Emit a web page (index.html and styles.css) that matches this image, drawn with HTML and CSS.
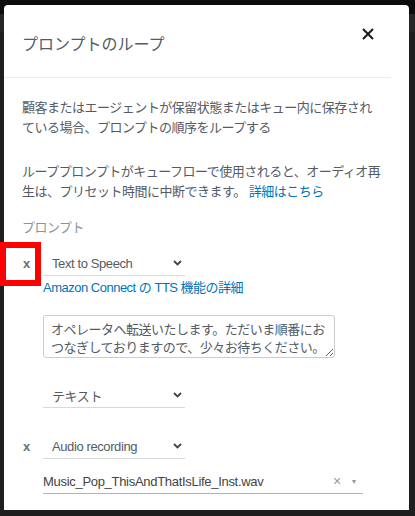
FILE: index.html
```html
<!DOCTYPE html>
<html>
<head>
    <meta charset="utf-8">
    <meta content="width=device-width, initial-scale=1" name="viewport">
    <title>プロンプトのループ</title>
    <link rel="stylesheet" href="styles.css">
</head>
<body>
<div class="modal">
    <div class="modal-header">
        <h2 class="modal-title">プロンプトのループ</h2>
        <button class="close-btn" type="button">
            <svg width="12" height="12" viewBox="0 0 12 12">
                <path d="M1 1 L11 11 M11 1 L1 11" stroke="#16191f" stroke-width="2" fill="none"/>
            </svg>
        </button>
    </div>
    <div class="modal-body">
        <p class="desc">顧客またはエージェントが保留状態またはキュー内に保存され<br>ている場合、プロンプトの順序をループする</p>
        <p class="desc">ループプロンプトがキューフローで使用されると、オーディオ再<br>生は、プリセット時間に中断できます。 <a class="link" href="#">詳細はこちら</a></p>

        <div class="field-label">プロンプト</div>

        <div class="prompt-row">
            <span class="remove">x</span>
            <div class="select">
                <span>Text to Speech</span>
                <svg class="chevron" width="9" height="6" viewBox="0 0 9 6">
                    <path d="M1 1 L4.5 4.5 L8 1" stroke="#444" stroke-width="1.8" fill="none"/>
                </svg>
            </div>
        </div>
        <a class="link tts-link" href="#">Amazon Connect の TTS 機能の詳細</a>
        <textarea class="tts-text">オペレータへ転送いたします。ただいま順番におつなぎしておりますので、少々お待ちください。</textarea>
        <div class="select type-select">
            <span>テキスト</span>
            <svg class="chevron" width="9" height="6" viewBox="0 0 9 6">
                <path d="M1 1 L4.5 4.5 L8 1" stroke="#444" stroke-width="1.8" fill="none"/>
            </svg>
        </div>

        <div class="prompt-row audio-row">
            <span class="remove">x</span>
            <div class="select">
                <span>Audio recording</span>
                <svg class="chevron" width="9" height="6" viewBox="0 0 9 6">
                    <path d="M1 1 L4.5 4.5 L8 1" stroke="#444" stroke-width="1.8" fill="none"/>
                </svg>
            </div>
        </div>
        <div class="file-select">
            <span class="file-name">Music_Pop_ThisAndThatIsLife_Inst.wav</span>
            <span class="file-clear">×</span>
            <span class="file-arrow">▼</span>
        </div>
    </div>
</div>
<div class="highlight"></div>
</body>
</html>
```

FILE: styles.css
```css
body {
    margin: 0;
    height: 516px;
    overflow: hidden;
    background: linear-gradient(#0c0c0c 0, #0c0c0c 14px, #262626 14px, #262626 32px, #1e1e1e 32px);
    font-family: "Liberation Sans", "Noto Sans CJK JP", sans-serif;
    color: #545b64;
}

.modal {
    margin: 5px 6px 0 4px;
    height: 505px;
    background-color: #fff;
    border-radius: 4px 4px 0 0;
    overflow: hidden;
}

.modal-header {
    display: flex;
    justify-content: space-between;
    align-items: flex-start;
    margin-right: 18px;
    padding: 28px 17px 20px 18px;
    border-bottom: 1px solid #eaeded;
}

.modal-title {
    margin: 0;
    font-size: 16px;
    font-weight: normal;
    line-height: 24px;
    color: #545b64;
}

.close-btn {
    margin-top: -5px;
    padding: 0;
    border: 0;
    background: none;
    width: 12px;
    height: 12px;
    line-height: 0;
}

.modal-body {
    padding: 20px 0 0 18px;
    font-size: 13px;
    letter-spacing: -0.5px;
}

.desc {
    margin: 0 0 24px;
    line-height: 20px;
}

.desc + .desc {
    margin-bottom: 16px;
}

.link {
    color: #0073bb;
    text-decoration: none;
}

.field-label {
    line-height: 20px;
    color: #879596;
    margin-bottom: 13px;
}

.prompt-row {
    display: flex;
    align-items: center;
}

.remove {
    width: 20px;
    padding-left: 1px;
    font-weight: bold;
    color: #687078;
    letter-spacing: 0;
}

.select {
    display: flex;
    align-items: center;
    justify-content: space-between;
    box-sizing: border-box;
    width: 142px;
    height: 25px;
    padding: 0 3px 0 9px;
    border-bottom: 1px solid #d5dbdb;
    color: #545b64;
    letter-spacing: -0.4px;
}

.tts-link {
    display: block;
    margin: 3px 0 0 21px;
    line-height: 18px;
}

.tts-text {
    display: block;
    box-sizing: border-box;
    width: 292px;
    height: 43px;
    margin: 18px 0 0 21px;
    padding: 5px 7px;
    border: 1px solid #ccc;
    border-radius: 3px;
    font-family: "Liberation Sans", "Noto Sans CJK JP", sans-serif;
    font-size: 13px;
    letter-spacing: -0.5px;
    line-height: 18px;
    color: #545b64;
    overflow: hidden;
}

.type-select {
    margin: 25px 0 0 21px;
}

.audio-row {
    margin-top: 26px;
}

.file-select {
    display: flex;
    align-items: center;
    box-sizing: border-box;
    width: 320px;
    height: 25px;
    margin: 10px 0 0 21px;
    border-bottom: 1px solid #aab7b8;
    color: #444;
}

.file-name {
    flex: 1;
    letter-spacing: -0.3px;
}

.file-clear {
    color: #999;
    font-size: 14px;
    margin-right: 10px;
}

.file-arrow {
    color: #999;
    font-size: 7px;
    margin-right: 6px;
}

.highlight {
    position: absolute;
    left: 0;
    top: 242px;
    width: 41px;
    height: 44px;
    box-sizing: border-box;
    border: 6px solid #f00;
}
```
